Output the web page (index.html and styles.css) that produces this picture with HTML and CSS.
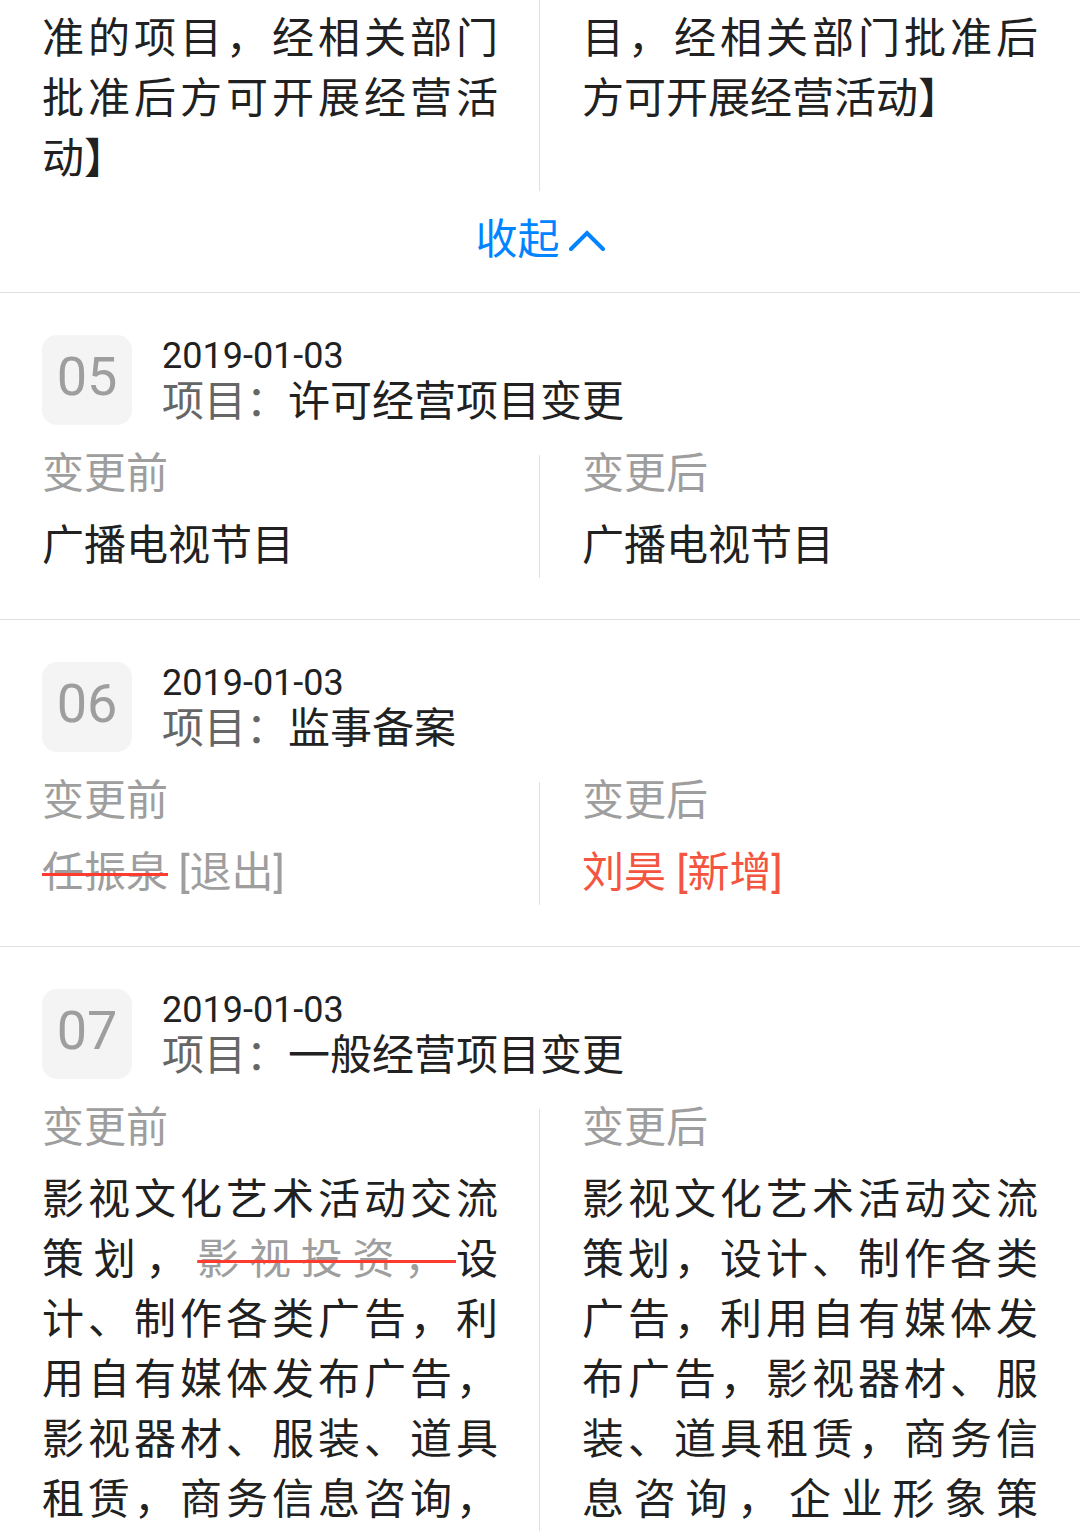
FILE: index.html
```html
<!DOCTYPE html>
<html lang="zh-CN">
<head>
<meta charset="utf-8">
<meta name="viewport" content="width=device-width, initial-scale=1">
<title>变更记录</title>
<link rel="stylesheet" href="styles.css">
</head>
<body>
<main class="records">
  <section class="record record-continued">
    <div class="compare">
      <div class="side"><p class="content">准的项目，经相关部门批准后方可开展经营活动】</p></div>
      <div class="side"><p class="content">目，经相关部门批准后方可开展经营活动】</p></div>
    </div>
    <button class="toggle" type="button">收起<svg class="chevron" viewBox="0 0 36 22" aria-hidden="true"><path d="M2 20 L18 4 L34 20"/></svg></button>
  </section>

  <section class="record">
    <header class="record-head">
      <span class="badge">05</span>
      <div class="meta">
        <time class="date" datetime="2019-01-03">2019-01-03</time>
        <h2 class="item"><span class="item-label">项目：</span>许可经营项目变更</h2>
      </div>
    </header>
    <div class="compare">
      <div class="side"><h3 class="label">变更前</h3><p class="content">广播电视节目</p></div>
      <div class="side"><h3 class="label">变更后</h3><p class="content">广播电视节目</p></div>
    </div>
  </section>

  <section class="record">
    <header class="record-head">
      <span class="badge">06</span>
      <div class="meta">
        <time class="date" datetime="2019-01-03">2019-01-03</time>
        <h2 class="item"><span class="item-label">项目：</span>监事备案</h2>
      </div>
    </header>
    <div class="compare">
      <div class="side"><h3 class="label">变更前</h3><p class="content muted"><del class="removed">任振泉</del> [退出]</p></div>
      <div class="side"><h3 class="label">变更后</h3><p class="content added">刘昊 [新增]</p></div>
    </div>
  </section>

  <section class="record record-open">
    <header class="record-head">
      <span class="badge">07</span>
      <div class="meta">
        <time class="date" datetime="2019-01-03">2019-01-03</time>
        <h2 class="item"><span class="item-label">项目：</span>一般经营项目变更</h2>
      </div>
    </header>
    <div class="compare">
      <div class="side"><h3 class="label">变更前</h3><p class="content">影视文化艺术活动交流策划，<del class="removed">影视投资，</del>设计、制作各类广告，利用自有媒体发布广告，影视器材、服装、道具租赁，商务信息咨询，</p></div>
      <div class="side"><h3 class="label">变更后</h3><p class="content">影视文化艺术活动交流策划，设计、制作各类广告，利用自有媒体发布广告，影视器材、服装、道具租赁，商务信息咨询，企业形象策</p></div>
    </div>
  </section>
</main>
</body>
</html>
```
FILE: styles.css
```css
* {
  box-sizing: border-box;
}

body {
  margin: 0;
  background: #fff;
  color: #212121;
  font-family: Roboto, "Noto Sans CJK SC", sans-serif;
  font-size: 42px;
  line-height: 60px;
  text-spacing-trim: space-all;
}

h2, h3, p {
  margin: 0;
  font-size: inherit;
  font-weight: 400;
}

.record {
  padding: 42px 0 41px;
  border-bottom: 1px solid #e0e0e0;
}

.record-continued {
  padding: 0;
}

.record-continued .side {
  padding-top: 9px;
}

.record-open {
  padding-bottom: 0;
  border-bottom: 0;
}

.record-head {
  display: flex;
  gap: 30px;
  padding: 0 42px;
  margin-bottom: 28px;
}

.badge {
  width: 90px;
  height: 90px;
  border-radius: 15px;
  background: #f4f4f4;
  color: #9e9e9e;
  font-size: 54px;
  line-height: 84px;
  text-align: center;
}

.date {
  display: block;
  font-size: 36px;
  line-height: 42px;
}

.item {
  line-height: 50px;
}

.item-label {
  color: #666;
}

.compare {
  display: grid;
  grid-template-columns: 1fr 1fr;
}

.side {
  padding: 1px 42px 2px;
}

.side:first-child {
  padding-right: 41px;
  border-right: 1px solid #e0e0e0;
}

.label {
  margin-bottom: 24px;
  color: #9e9e9e;
  line-height: 36px;
}

.content {
  text-align: justify;
}

.record-open .content {
  text-align-last: justify;
}

.muted,
.removed {
  color: #9e9e9e;
}

.removed {
  text-decoration: line-through #ff3b30 3px;
}

.added {
  color: #f45541;
}

.toggle {
  display: flex;
  align-items: center;
  justify-content: center;
  gap: 9px;
  width: 100%;
  height: 101px;
  padding: 0 0 4px;
  border: 0;
  background: none;
  color: #0084ff;
  font: inherit;
  cursor: pointer;
}

.chevron {
  width: 36px;
  height: 22px;
  fill: none;
  stroke: currentColor;
  stroke-width: 4;
  stroke-linecap: round;
}
```
